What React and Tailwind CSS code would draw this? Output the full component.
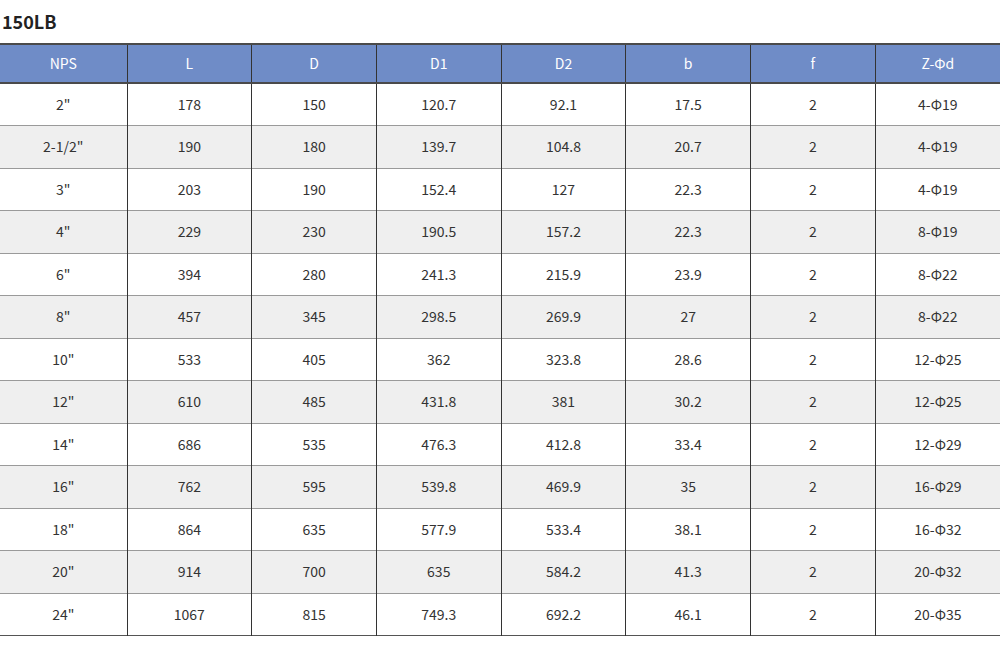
const headers = ['NPS', 'L', 'D', 'D1', 'D2', 'b', 'f', 'Z-Φd'];

const rows = [
  ['2"', '178', '150', '120.7', '92.1', '17.5', '2', '4-Φ19'],
  ['2-1/2"', '190', '180', '139.7', '104.8', '20.7', '2', '4-Φ19'],
  ['3"', '203', '190', '152.4', '127', '22.3', '2', '4-Φ19'],
  ['4"', '229', '230', '190.5', '157.2', '22.3', '2', '8-Φ19'],
  ['6"', '394', '280', '241.3', '215.9', '23.9', '2', '8-Φ22'],
  ['8"', '457', '345', '298.5', '269.9', '27', '2', '8-Φ22'],
  ['10"', '533', '405', '362', '323.8', '28.6', '2', '12-Φ25'],
  ['12"', '610', '485', '431.8', '381', '30.2', '2', '12-Φ25'],
  ['14"', '686', '535', '476.3', '412.8', '33.4', '2', '12-Φ29'],
  ['16"', '762', '595', '539.8', '469.9', '35', '2', '16-Φ29'],
  ['18"', '864', '635', '577.9', '533.4', '38.1', '2', '16-Φ32'],
  ['20"', '914', '700', '635', '584.2', '41.3', '2', '20-Φ32'],
  ['24"', '1067', '815', '749.3', '692.2', '46.1', '2', '20-Φ35'],
];

export default function App() {
  return (
    <div
      className="w-[1000px] h-[646px] bg-white overflow-hidden"
      style={{ fontFamily: '"Noto Sans CJK SC", "Noto Sans", sans-serif' }}
    >
      <h2 className="pl-[2px] pt-[8px] h-[43px] text-[18px] leading-[26px] font-bold text-[#222]">150LB</h2>
      <table className="w-[1000px] table-fixed border-collapse text-[14px]">
        <colgroup>
          <col className="w-[127px]" />
          {headers.slice(1).map((h) => (
            <col key={h} />
          ))}
        </colgroup>
        <thead>
          <tr className="h-[39px] bg-[#6f8cc7] border-t-2 border-b-2 border-[#4a4a4a]">
            {headers.map((h, i) => (
              <th
                key={h}
                className={`font-normal text-white text-center p-0 ${i > 0 ? 'border-l border-[#333]' : ''}`}
              >
                {h}
              </th>
            ))}
          </tr>
        </thead>
        <tbody>
          {rows.map((r, ri) => (
            <tr
              key={r[0]}
              className={`h-[42.5px] border-b ${ri === rows.length - 1 ? 'border-[#555]' : 'border-[#9a9a9a]'} ${ri % 2 === 1 ? 'bg-[#efefef]' : 'bg-white'}`}
            >
              {r.map((c, ci) => (
                <td
                  key={ci}
                  className={`text-center text-[#333] p-0 ${ci > 0 ? 'border-l border-[#333]' : ''}`}
                >
                  {c}
                </td>
              ))}
            </tr>
          ))}
        </tbody>
      </table>
    </div>
  );
}
